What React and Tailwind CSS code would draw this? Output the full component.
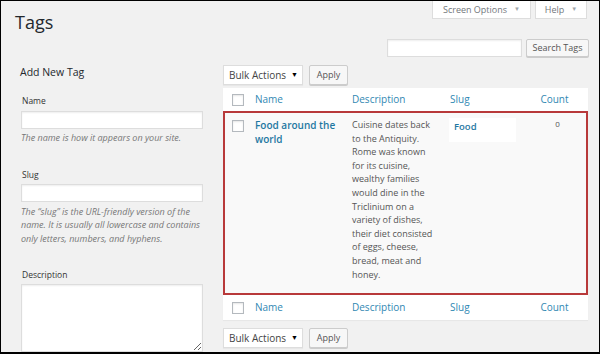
import React from "react";

const descLines = [
  "Cuisine dates back",
  "to the Antiquity.",
  "Rome was known",
  "for its cuisine,",
  "wealthy families",
  "would dine in the",
  "Triclinium on a",
  "variety of dishes,",
  "their diet consisted",
  "of eggs, cheese,",
  "bread, meat and",
  "honey.",
];

function Checkbox() {
  return (
    <span className="block w-[12px] h-[12px] border border-[#b4b9be] bg-white shadow-[inset_0_1px_2px_rgba(0,0,0,0.1)]" />
  );
}

function BulkBar() {
  return (
    <div className="flex gap-[6px]">
      <div className="flex items-center justify-between w-[80px] h-[20px] pl-[5px] pr-[4px] bg-white border border-[#ddd] text-[10px] text-[#444] shadow-[0_1px_1px_rgba(0,0,0,0.04)]">
        <span>Bulk Actions</span>
        <span className="text-[7px] text-black">▼</span>
      </div>
      <button className="h-[20px] w-[39px] bg-[#f7f7f7] border border-[#ccc] rounded-[2px] text-[9px] text-[#555] shadow-[0_1px_0_#ccc]">
        Apply
      </button>
    </div>
  );
}

function HeadRow({ top }) {
  const link = "text-[10px] text-[#3188b3]";
  return (
    <div
      className={
        "grid grid-cols-[24px_97px_98px_79px_1fr] items-center bg-white " +
        (top ? "h-[23px]" : "h-[25px]")
      }
    >
      <div className="pl-[9px]">
        <Checkbox />
      </div>
      <div className={"pl-[8px] " + link}>Name</div>
      <div className={"pl-[8px] " + link}>Description</div>
      <div className={"pl-[8px] " + link}>Slug</div>
      <div className={"text-center " + link}>Count</div>
    </div>
  );
}

export default function App() {
  return (
    <div
      className="w-[600px] h-[354px] overflow-hidden bg-[#f1f1f1] border border-b-2 border-black text-[#444]"
      style={{ fontFamily: '"Open Sans", "Noto Sans", sans-serif' }}
    >
      {/* top: title, screen meta links, search */}
      <div className="flex justify-between">
        <h1 className="pl-[14px] pt-[9px] text-[18px] leading-[24px] text-[#23282d]">Tags</h1>
        <div className="flex flex-col items-end">
          <div className="flex gap-[4px] pr-[12px]">
            <button className="flex items-center justify-center gap-[7px] h-[18px] w-[99px] bg-white border border-t-0 border-[#ddd] text-[9px] text-[#72777c]">
              Screen Options <span className="text-[6px] text-[#a0a5aa]">▼</span>
            </button>
            <button className="flex items-center justify-center gap-[7px] h-[18px] w-[52px] bg-white border border-t-0 border-[#ddd] text-[9px] text-[#72777c]">
              Help <span className="text-[6px] text-[#a0a5aa]">▼</span>
            </button>
          </div>
          <div className="flex gap-[4px] pr-[10px] mt-[20px]">
            <input className="w-[135px] h-[18px] bg-white border border-[#ddd] shadow-[inset_0_1px_2px_rgba(0,0,0,0.07)] outline-none" />
            <button className="h-[18px] w-[63px] bg-[#f7f7f7] border border-[#ccc] rounded-[2px] text-[9px] text-[#555] shadow-[0_1px_0_#ccc]">
              Search Tags
            </button>
          </div>
        </div>
      </div>

      <div className="flex mt-[8px]">
        {/* add new tag form */}
        <div className="ml-[19px] w-[183px] flex flex-col">
          <h3 className="text-[10.5px] leading-[14px] font-medium text-[#23282d]">Add New Tag</h3>
          <label className="mt-[16px] ml-[2px] text-[8.5px] leading-[12px] text-[#333]">Name</label>
          <input className="mt-[4px] ml-[1px] h-[18px] bg-white border border-[#ddd] shadow-[inset_0_1px_2px_rgba(0,0,0,0.07)] outline-none" />
          <p className="mt-[3px] ml-[1px] text-[9px] leading-[12px] italic text-[#777]">
            The name is how it appears on your site.
          </p>
          <label className="mt-[25px] ml-[2px] text-[8.5px] leading-[12px] text-[#333]">Slug</label>
          <input className="mt-[3px] ml-[1px] h-[18px] bg-white border border-[#ddd] shadow-[inset_0_1px_2px_rgba(0,0,0,0.07)] outline-none" />
          <p className="mt-[3px] ml-[1px] text-[9px] leading-[13.4px] italic text-[#777]">
            The “slug” is the URL-friendly version of the name. It is usually all lowercase and contains only letters, numbers, and hyphens.
          </p>
          <label className="mt-[24px] ml-[2px] text-[8.5px] leading-[12px] text-[#333]">Description</label>
          <textarea className="mt-[3px] ml-[1px] h-[68px] bg-white border border-[#ddd] shadow-[inset_0_1px_2px_rgba(0,0,0,0.07)] outline-none resize-y" />
        </div>

        {/* tags list */}
        <div className="ml-[20px] w-[365px] flex flex-col">
          <BulkBar />
          <div className="mt-[3px] flex flex-col shadow-[0_1px_1px_rgba(0,0,0,0.04)]">
            <HeadRow top />
            <div className="grid grid-cols-[22px_97px_98px_79px_1fr] h-[184px] bg-[#f9f9f9] border-2 border-[#b8393a]">
              <div className="pl-[7px] pt-[7px]">
                <Checkbox />
              </div>
              <div className="pl-[8px] pt-[5px]">
                <div className="w-[86px] text-[10px] leading-[14px] font-semibold text-[#1f78a2]">
                  Food around the world
                </div>
              </div>
              <div className="pl-[8px] pt-[5px] text-[9px] leading-[13.6px] text-[#555] whitespace-nowrap">
                {descLines.map((l) => (
                  <span key={l} className="block">
                    {l}
                  </span>
                ))}
              </div>
              <div className="pl-[7px] pt-[5px]">
                <div className="w-[67px] h-[24px] bg-white pl-[5px] pt-[2px] text-[9.5px] leading-[13px] font-semibold text-[#1f78a2]">
                  Food
                </div>
              </div>
              <div className="pl-[8px] pt-[5px] text-center text-[8px] leading-[12px] text-[#555]">0</div>
            </div>
            <HeadRow />
          </div>
          <div className="mt-[8px]">
            <BulkBar />
          </div>
        </div>
      </div>
    </div>
  );
}
